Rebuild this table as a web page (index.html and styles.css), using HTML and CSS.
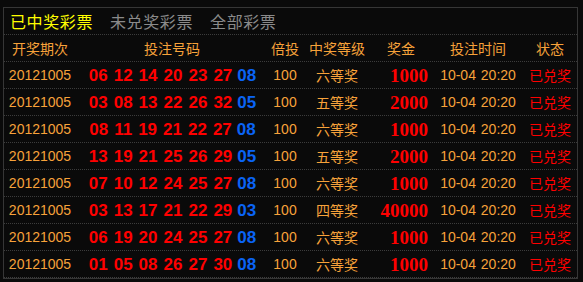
FILE: index.html
```html
<!DOCTYPE html>
<html lang="zh-CN">
<head>
<meta charset="utf-8">
<title>已中奖彩票</title>
<link rel="stylesheet" href="styles.css">
</head>
<body>
<div class="panel">
  <div class="tabs">
    <span class="tab active">已中奖彩票</span>
    <span class="tab">未兑奖彩票</span>
    <span class="tab">全部彩票</span>
  </div>
  <div class="row head">
    <div class="c c1">开奖期次</div>
    <div class="c c2">投注号码</div>
    <div class="c c3">倍投</div>
    <div class="c c4">中奖等级</div>
    <div class="c c5h">奖金</div>
    <div class="c c6">投注时间</div>
    <div class="c c7">状态</div>
  </div>

  <div class="row">
    <div class="c c1 num">20121005</div>
    <div class="c c2 balls"><span>06</span><span>12</span><span>14</span><span>20</span><span>23</span><span>27</span><span class="blue">08</span></div>
    <div class="c c3 num">100</div>
    <div class="c c4 cjk">六等奖</div>
    <div class="c c5 money">1000</div>
    <div class="c c6 num time">10-04 20:20</div>
    <div class="c c7 cjk st">已兑奖</div>
  </div>
  <div class="row">
    <div class="c c1 num">20121005</div>
    <div class="c c2 balls"><span>03</span><span>08</span><span>13</span><span>22</span><span>26</span><span>32</span><span class="blue">05</span></div>
    <div class="c c3 num">100</div>
    <div class="c c4 cjk">五等奖</div>
    <div class="c c5 money">2000</div>
    <div class="c c6 num time">10-04 20:20</div>
    <div class="c c7 cjk st">已兑奖</div>
  </div>
  <div class="row">
    <div class="c c1 num">20121005</div>
    <div class="c c2 balls"><span>08</span><span>11</span><span>19</span><span>21</span><span>22</span><span>27</span><span class="blue">08</span></div>
    <div class="c c3 num">100</div>
    <div class="c c4 cjk">六等奖</div>
    <div class="c c5 money">1000</div>
    <div class="c c6 num time">10-04 20:20</div>
    <div class="c c7 cjk st">已兑奖</div>
  </div>
  <div class="row">
    <div class="c c1 num">20121005</div>
    <div class="c c2 balls"><span>13</span><span>19</span><span>21</span><span>25</span><span>26</span><span>29</span><span class="blue">05</span></div>
    <div class="c c3 num">100</div>
    <div class="c c4 cjk">五等奖</div>
    <div class="c c5 money">2000</div>
    <div class="c c6 num time">10-04 20:20</div>
    <div class="c c7 cjk st">已兑奖</div>
  </div>
  <div class="row">
    <div class="c c1 num">20121005</div>
    <div class="c c2 balls"><span>07</span><span>10</span><span>12</span><span>24</span><span>25</span><span>27</span><span class="blue">08</span></div>
    <div class="c c3 num">100</div>
    <div class="c c4 cjk">六等奖</div>
    <div class="c c5 money">1000</div>
    <div class="c c6 num time">10-04 20:20</div>
    <div class="c c7 cjk st">已兑奖</div>
  </div>
  <div class="row">
    <div class="c c1 num">20121005</div>
    <div class="c c2 balls"><span>03</span><span>13</span><span>17</span><span>21</span><span>22</span><span>29</span><span class="blue">03</span></div>
    <div class="c c3 num">100</div>
    <div class="c c4 cjk">四等奖</div>
    <div class="c c5 money">40000</div>
    <div class="c c6 num time">10-04 20:20</div>
    <div class="c c7 cjk st">已兑奖</div>
  </div>
  <div class="row">
    <div class="c c1 num">20121005</div>
    <div class="c c2 balls"><span>06</span><span>19</span><span>20</span><span>24</span><span>25</span><span>27</span><span class="blue">08</span></div>
    <div class="c c3 num">100</div>
    <div class="c c4 cjk">六等奖</div>
    <div class="c c5 money">1000</div>
    <div class="c c6 num time">10-04 20:20</div>
    <div class="c c7 cjk st">已兑奖</div>
  </div>
  <div class="row">
    <div class="c c1 num">20121005</div>
    <div class="c c2 balls"><span>01</span><span>05</span><span>08</span><span>26</span><span>27</span><span>30</span><span class="blue">08</span></div>
    <div class="c c3 num">100</div>
    <div class="c c4 cjk">六等奖</div>
    <div class="c c5 money">1000</div>
    <div class="c c6 num time">10-04 20:20</div>
    <div class="c c7 cjk st">已兑奖</div>
  </div>
</div>
</body>
</html>
```
FILE: styles.css
```css
html, body {
  margin: 0;
  padding: 0;
  background: #0a0a0a;
  overflow: hidden;
}
body {
  padding: 7px 5px 0 3px;
  font-family: "Noto Sans CJK SC", "DejaVu Sans", sans-serif;
  color: #f7a23a;
}
.panel {
  border: 1px solid #363636;
  background: #0a0a0a;
}
.tabs {
  height: 26px;
  display: flex;
  align-items: center;
  gap: 17px;
  padding-left: 6px;
  border-bottom: 1px dotted #3c3c3c;
  font-size: 16px;
  letter-spacing: 0.6px;
}
.tab {
  color: #8a8a8a;
  line-height: 1;
}
.tab.active {
  color: #ffff00;
}
.row {
  display: grid;
  grid-template-columns: 72px 192px 34px 70px 58px 96px 48px;
  padding-right: 3px;
  height: 26px;
  border-bottom: 1px dotted #3c3c3c;
  align-items: center;
  font-size: 14px;
}
.c {
  text-align: center;
  line-height: 1;
  white-space: nowrap;
}
.cjk {
  padding-bottom: 1px;
}
.num {
  font-family: "Liberation Sans", Arial, sans-serif;
  font-size: 14px;
}
.time {
  word-spacing: 1px;
}
.balls {
  display: flex;
  justify-content: center;
  gap: 6px;
  padding-left: 1px;
  font-family: "Liberation Sans", Arial, sans-serif;
  font-weight: bold;
  font-size: 17px;
  color: #ff0000;
}
.balls .blue {
  color: #0a64f5;
  margin-left: -1px;
}
.money {
  text-align: right;
  padding-right: 2px;
  font-family: "Liberation Serif", "Times New Roman", serif;
  font-weight: bold;
  font-size: 19px;
  color: #ff0000;
}
.st {
  color: #ff0000;
}
```
